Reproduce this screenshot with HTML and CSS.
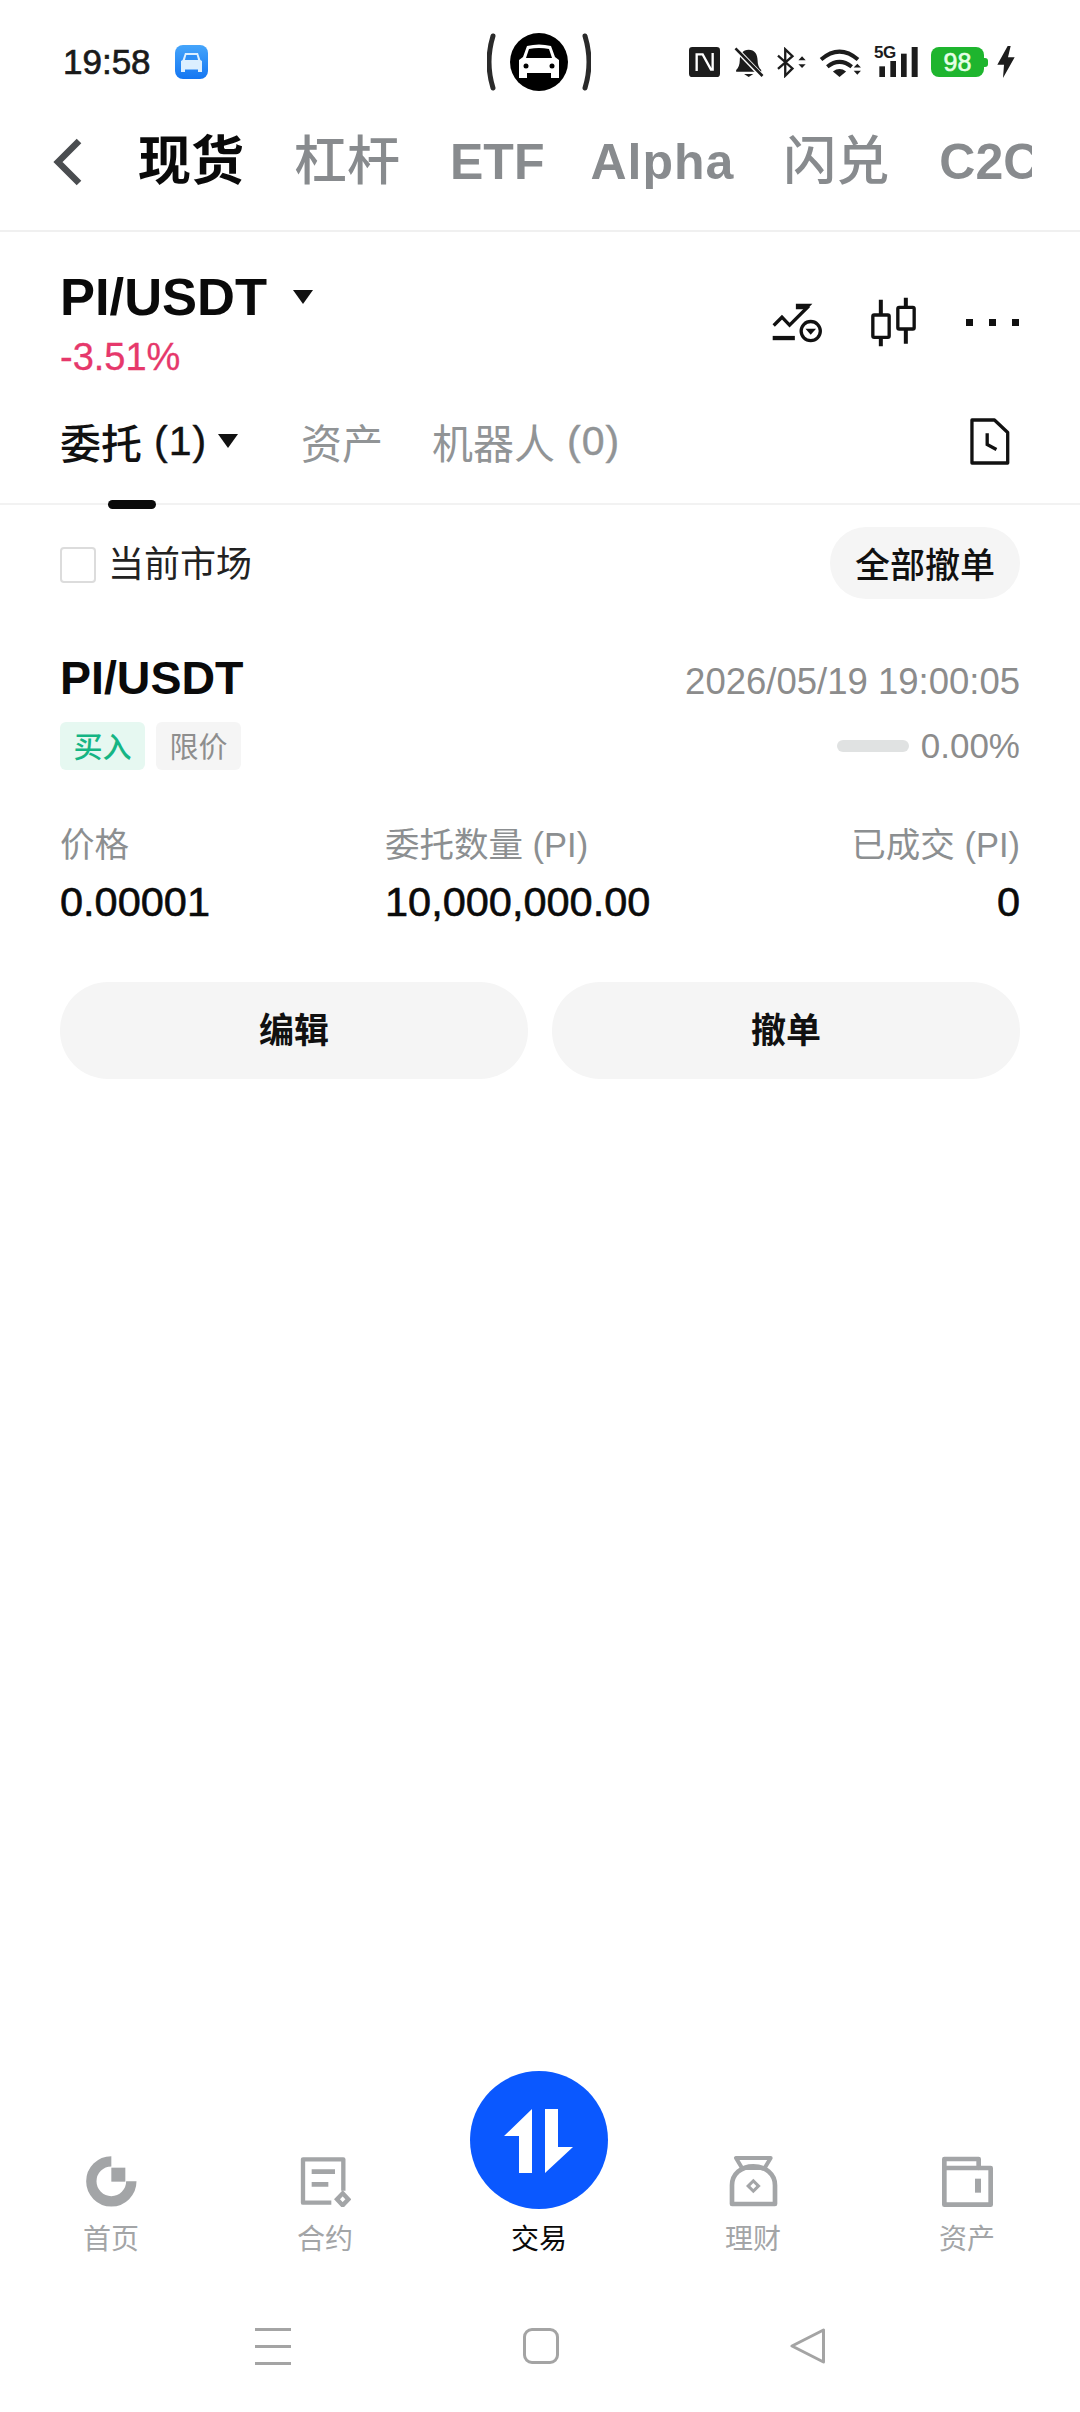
FILE: index.html
```html
<!DOCTYPE html>
<html lang="zh-CN">
<head>
    <meta charset="UTF-8">
    <meta name="viewport" content="width=device-width, initial-scale=1.0">
    <title>PI/USDT 现货委托</title>
    <link rel="stylesheet" href="styles.css">
</head>
<body>
<div class="page">

    <div class="status">
        <div class="status-left">
            <span class="clock">19:58</span>
            <svg class="app-icon" viewBox="0 0 33 34">
                <defs><linearGradient id="appbg" x1="0" y1="0" x2="0" y2="1"><stop offset="0" stop-color="#45a5fb"/><stop offset="1" stop-color="#1476f2"/></linearGradient></defs>
                <rect width="33" height="34" rx="8" fill="url(#appbg)"/>
                <path d="M10 8h13l2.400 7 1.600 1v11h-4v-2.500H10V27H6V16l1.600-1z" fill="#dcefff"/>
                <path d="M11.300 10h10.400l1.400 5H9.900z" fill="#2d8ef5"/>
            </svg>
        </div>
        <svg class="car-badge" viewBox="0 0 104 62">
            <path d="M6 5Q-2 31 6 57M98 5Q106 31 98 57" fill="none" stroke="#2a2a2a" stroke-width="5" stroke-linecap="round"/>
            <circle cx="52" cy="31" r="29" fill="#000"/>
            <path d="M40 15q12-3 24 0l4 11 4 3v18h-8v-5H40v5h-8V29l4-3z" fill="#fff"/>
            <path d="M42 18q10-2 20 0l3 9H39z" fill="#000"/>
            <circle cx="39" cy="35" r="2.500" fill="#000"/>
            <circle cx="65" cy="35" r="2.500" fill="#000"/>
        </svg>
        <div class="status-right">
            <svg class="ic-nfc" viewBox="85 50 93 90">
                <rect x="85" y="50" width="93" height="90" rx="10" fill="#1c1c1c"/>
                <path d="M108 122V72h18l25 46h5V68" fill="none" stroke="#fff" stroke-width="7"/>
            </svg>
            <svg class="ic-bell" viewBox="218 48 90 94">
                <path d="M262 56c-18 0-27 14-27 32 0 14-4 22-11 30v5h76v-5c-7-8-11-16-11-30 0-18-9-32-27-32z" fill="#1c1c1c"/>
                <path d="M248 130h28l-14 9z" fill="#1c1c1c"/>
                <path d="M214 44l90 94" stroke="#fff" stroke-width="15"/>
                <path d="M222 52l82 84" stroke="#1c1c1c" stroke-width="8"/>
            </svg>
            <svg class="ic-bt" viewBox="345 48 92 94">
                <path d="M350 74l44 39-22 22V55l22 21-44 38" fill="none" stroke="#1c1c1c" stroke-width="7"/>
                <path d="M412 88l11-12 11 12zM412 100l11 12 11-12z" fill="#1c1c1c"/>
            </svg>
            <svg class="ic-wifi" viewBox="475 50 130 94">
                <path d="M481 88q56-48 112 0M500 110q37-30 74 0" fill="none" stroke="#1c1c1c" stroke-width="12"/>
                <path d="M517 124q20-14 40 0l-20 17z" fill="#1c1c1c"/>
                <path d="M580 112l11-11 11 11zM580 122l11 12 11-12z" fill="#1c1c1c"/>
            </svg>
            <div class="signal">
                <span class="net">5G</span>
                <svg class="ic-bars" viewBox="655 50 115 90">
                    <rect x="655" y="108" width="17" height="32" fill="#1c1c1c"/>
                    <rect x="688" y="92" width="17" height="48" fill="#1c1c1c"/>
                    <rect x="720" y="70" width="17" height="70" fill="#1c1c1c"/>
                    <rect x="752" y="50" width="18" height="90" fill="#1c1c1c"/>
                </svg>
            </div>
            <div class="battery"><span class="battery-level">98</span></div>
            <svg class="ic-bolt" viewBox="1010 50 54 96">
                <path d="M1042 50l-31 56h20l-3 40 35-62h-20l8-34z" fill="#1c1c1c"/>
            </svg>
        </div>
    </div>

    <div class="topnav">
        <svg class="back" viewBox="0 0 30 48"><path d="M26 3L5 24l21 21" fill="none" stroke="#4a4d50" stroke-width="6.500"/></svg>
        <div class="topnav-tabs">
            <span class="topnav-tab active">现货</span>
            <span class="topnav-tab">杠杆</span>
            <span class="topnav-tab latin">ETF</span>
            <span class="topnav-tab latin alpha">Alpha</span>
            <span class="topnav-tab">闪兑</span>
            <span class="topnav-tab latin">C2C</span>
        </div>
    </div>

    <div class="pair">
        <div class="pair-info">
            <div class="pair-name">
                <span>PI/USDT</span>
                <i class="caret caret-lg"></i>
            </div>
            <div class="pair-change">-3.51%</div>
        </div>
        <div class="pair-tools">
            <svg class="tool-trend" viewBox="95 92 160 130">
                <path d="M103 166l25-25 23 24 58-58" fill="none" stroke="#111" stroke-width="10"/>
                <path d="M170 100h50l-16 17h-34z" fill="#111"/>
                <path d="M100 204h67" stroke="#111" stroke-width="13"/>
                <circle cx="215" cy="183" r="29" fill="#fff" stroke="#111" stroke-width="10"/>
                <path d="M199 176h32l-16 18z" fill="#111"/>
            </svg>
            <svg class="tool-candle" viewBox="392 82 140 150">
                <path d="M424 90v140M499 84v138" stroke="#111" stroke-width="12"/>
                <rect x="400" y="136" width="49" height="67" rx="4" fill="#fff" stroke="#111" stroke-width="10"/>
                <rect x="475" y="113" width="49" height="65" rx="4" fill="#fff" stroke="#111" stroke-width="10"/>
            </svg>
            <div class="tool-more"><i></i><i></i><i></i></div>
        </div>
    </div>

    <div class="subtabs">
        <div class="subtab active">
            <span>委托</span>
            <span class="count">(1)</span>
            <i class="caret caret-sm"></i>
            <b class="underline"></b>
        </div>
        <div class="subtab">资产</div>
        <div class="subtab">机器人<span class="count">(0)</span></div>
        <svg class="history" viewBox="688 446 122 142">
            <path d="M696 452h68l40 38v92H696z" fill="none" stroke="#111" stroke-width="10" stroke-linejoin="round"/>
            <path d="M742 492v34l28 15" fill="none" stroke="#111" stroke-width="10"/>
        </svg>
    </div>

    <div class="filter">
        <label class="check"><i class="box"></i>当前市场</label>
        <button class="cancel-all">全部撤单</button>
    </div>

    <div class="order">
        <div class="order-head">
            <div class="order-title">PI/USDT</div>
            <div class="order-time">2026/05/19 19:00:05</div>
        </div>
        <div class="order-meta">
            <div class="tags">
                <span class="tag buy">买入</span>
                <span class="tag">限价</span>
            </div>
            <div class="fill">
                <span class="fill-bar"></span>
                <span>0.00%</span>
            </div>
        </div>
        <div class="order-cols">
            <div class="col">
                <div class="col-label">价格</div>
                <div class="col-value">0.00001</div>
            </div>
            <div class="col">
                <div class="col-label">委托数量 (PI)</div>
                <div class="col-value">10,000,000.00</div>
            </div>
            <div class="col right">
                <div class="col-label">已成交 (PI)</div>
                <div class="col-value">0</div>
            </div>
        </div>
        <div class="order-actions">
            <button>编辑</button>
            <button>撤单</button>
        </div>
    </div>

    <div class="spacer"></div>

    <div class="bottom-tabs">
        <div class="btab">
            <svg class="btab-icon" viewBox="140 320 153 153">
                <path d="M216 336a60 60 0 1 0 60 60" fill="none" stroke="#a3a5a7" stroke-width="31"/>
                <rect x="216" y="355" width="42" height="42" fill="#a3a5a7"/>
            </svg>
            <span>首页</span>
        </div>
        <div class="btab">
            <svg class="btab-icon" viewBox="780 320 153 153">
                <path d="M874 460H789V330H910V424" fill="none" stroke="#a3a5a7" stroke-width="13" stroke-linejoin="round"/>
                <path d="M815 367h70M815 405h50" stroke="#a3a5a7" stroke-width="14"/>
                <path d="M908 432l17 18-17 18-17-18z" fill="none" stroke="#a3a5a7" stroke-width="13"/>
            </svg>
            <span>合约</span>
        </div>
        <div class="btab active">
            <svg class="trade" viewBox="0 0 138 138">
                <circle cx="69" cy="69" r="69" fill="#0a58ff"/>
                <path d="M62 38L34 65H49V102H62zM75 38H88V76H103L75 102z" fill="#fff"/>
            </svg>
            <span>交易</span>
        </div>
        <div class="btab">
            <svg class="btab-icon" viewBox="0 0 153 153">
                <path d="M12 144V88c0-34 28-57 64-57s65 23 65 57v56z" fill="none" stroke="#a3a5a7" stroke-width="14" stroke-linejoin="round"/>
                <path d="M24 6h104L110 36H42z" fill="none" stroke="#a3a5a7" stroke-width="12" stroke-linejoin="round"/>
                <path d="M76 68l22 22-22 22-22-22z" fill="#a3a5a7"/>
                <path d="M76 81l9 9-9 9-9-9z" fill="#fff"/>
            </svg>
            <span>理财</span>
        </div>
        <div class="btab">
            <svg class="btab-icon" viewBox="0 0 153 153">
                <path d="M7 146V9H110V36H146V146z" fill="none" stroke="#a3a5a7" stroke-width="14" stroke-linejoin="round"/>
                <path d="M7 36H110" stroke="#a3a5a7" stroke-width="13"/>
                <rect x="99" y="68" width="18" height="42" fill="#a3a5a7"/>
            </svg>
            <span>资产</span>
        </div>
    </div>

    <div class="sysnav">
        <div class="sys-menu"><i></i><i></i><i></i></div>
        <div class="sys-home"></div>
        <svg class="sys-back" viewBox="0 0 36 36"><path d="M33.500 2v32L2 18z" fill="none" stroke="#a4a4a4" stroke-width="3" stroke-linejoin="round"/></svg>
    </div>

</div>
</body>
</html>
```

FILE: styles.css
```css
* { box-sizing: border-box; }
body { margin: 0; background: #fff; font-family: "Liberation Sans", "Noto Sans CJK SC", sans-serif; color: #111; }
i { display: block; font-style: normal; }
svg { display: block; flex: none; }
button { font-family: inherit; border: none; background: #f5f5f5; color: #111; padding: 0; }

.page { width: 1080px; height: 2412px; display: flex; flex-direction: column; overflow: hidden; }

/* status bar */
.status { height: 124px; display: grid; grid-template-columns: 1fr 104px 1fr; align-items: center; padding: 0 65px 0 63px; }
.status-left { display: flex; align-items: center; gap: 24px; }
.clock { font-size: 35px; color: #1a1a1a; -webkit-text-stroke: 0.7px #1a1a1a; }
.app-icon { width: 33px; height: 34px; }
.car-badge { width: 104px; height: 62px; }
.status-right { display: flex; align-items: center; justify-content: flex-end; }
.ic-nfc { width: 31px; height: 30px; margin-right: 14px; }
.ic-bell { width: 30px; height: 31px; margin-right: 12px; }
.ic-bt { width: 31px; height: 31px; margin-right: 12px; }
.ic-wifi { width: 43px; height: 31px; margin-right: 12px; }
.signal { position: relative; width: 44px; height: 30px; margin-right: 13px; }
.net { position: absolute; left: 0; top: -2px; font-size: 17px; font-weight: 700; line-height: 16px; color: #1c1c1c; letter-spacing: -0.5px; }
.ic-bars { position: absolute; right: 0; top: 0; width: 39px; height: 30px; }
.battery { position: relative; width: 53px; height: 30px; background: #1eb52e; border-radius: 8px; display: flex; align-items: center; justify-content: center; margin-right: 13px; }
.battery::after { content: ""; position: absolute; right: -4px; top: 11px; width: 4px; height: 9px; background: #1eb52e; border-radius: 0 3px 3px 0; }
.battery-level { font-size: 25px; color: #e6ffe6; -webkit-text-stroke: 0.6px #e6ffe6; }
.ic-bolt { width: 18px; height: 32px; }

/* top tabs */
.topnav { height: 108px; padding: 0 48px 30px 53px; display: flex; align-items: center; border-bottom: 2px solid #f0f0f0; }
.back { width: 30px; height: 48px; margin-right: 55px; }
.topnav-tabs { flex: 1; display: flex; gap: 50px; overflow: hidden; }
.topnav-tab { font-size: 53px; font-weight: 500; line-height: 76px; color: #888b8e; white-space: nowrap; flex: none; }
.topnav-tab.latin { font-size: 50px; font-weight: 700; }
.topnav-tab.alpha { letter-spacing: 1px; margin: 0 -1px 0 -4px; }
.topnav-tab.active { color: #0a0a0a; font-weight: 700; }

/* pair header */
.pair { display: flex; justify-content: space-between; padding: 33px 60px 0; }
.pair-name { display: flex; align-items: center; gap: 26px; font-size: 52.500px; font-weight: 700; line-height: 64px; color: #0a0a0a; }
.pair-change { font-size: 38px; line-height: 44px; margin-top: 6px; color: #e6386b; -webkit-text-stroke: 0.3px #e6386b; }
.caret { width: 0; height: 0; border-style: solid; border-color: #111 transparent transparent; }
.caret-lg { border-width: 14px 10px 0; }
.caret-sm { border-width: 14px 10px 0; margin-left: 11px; }
.pair-tools { display: flex; align-items: center; }
.tool-trend { width: 53px; height: 43px; margin-right: 46px; }
.tool-candle { width: 47px; height: 50px; margin-right: 49px; }
.tool-more { display: flex; gap: 16px; width: 54px; }
.tool-more i { width: 7px; height: 7px; background: #111; }

/* sub tabs */
.subtabs { height: 126px; padding: 0 60px; display: flex; align-items: center; gap: 49px; border-bottom: 2px solid #f2f2f2; }
.subtab { position: relative; display: flex; align-items: center; font-size: 41px; color: #919496; }
.subtab.active { color: #111; font-weight: 500; margin-right: 14px; }
.subtab .count { margin-left: 12px; letter-spacing: 1px; -webkit-text-stroke: 0.4px currentColor; }
.underline { position: absolute; left: 48px; bottom: -38px; width: 48px; height: 9px; border-radius: 5px; background: #0a0a0a; }
.history { width: 41px; height: 47px; margin-left: auto; margin-right: 10px; }

/* filter */
.filter { display: flex; justify-content: space-between; align-items: center; padding: 22px 60px 0; }
.check { display: flex; align-items: center; gap: 12px; padding-top: 4px; font-size: 36px; line-height: 44px; color: #222; }
.box { width: 36px; height: 36px; margin-top: -1px; border: 2px solid #dcdcdc; border-radius: 4px; }
.cancel-all { width: 190px; height: 72px; padding-bottom: 2px; border-radius: 36px; font-size: 35px; font-weight: 500; }

/* order card */
.order { padding: 52px 60px 0; }
.order-head { display: flex; justify-content: space-between; align-items: baseline; height: 54px; }
.order-title { font-size: 46.500px; font-weight: 700; color: #0a0a0a; }
.order-time { font-size: 36.500px; color: #8c8c8c; }
.order-meta { display: flex; justify-content: space-between; align-items: center; margin-top: 17px; }
.tags { display: flex; gap: 11px; }
.tag { width: 85px; height: 48px; padding-bottom: 3px; border-radius: 6px; background: #f5f5f5; color: #8e8e8e; font-size: 29px; display: flex; align-items: center; justify-content: center; }
.tag.buy { background: #e6f8f1; color: #15b584; font-weight: 500; }
.fill { display: flex; align-items: center; gap: 12px; font-size: 35px; color: #8c8c8c; }
.fill-bar { width: 72px; height: 12px; border-radius: 6px; background: #e0e2e2; }
.order-cols { display: grid; grid-template-columns: 325px 1fr auto; margin-top: 53px; }
.col.right { text-align: right; }
.col-label { font-size: 34.500px; line-height: 44px; color: #8c8f91; }
.col-value { font-size: 41.500px; line-height: 52px; margin-top: 9px; color: #0a0a0a; -webkit-text-stroke: 0.6px #0a0a0a; }
.order-actions { display: flex; gap: 24px; margin-top: 54px; }
.order-actions button { flex: 1; height: 97px; padding-bottom: 6px; border-radius: 48px; font-size: 35px; font-weight: 700; }

.spacer { flex: 1; }

/* bottom tabs */
.bottom-tabs { display: grid; grid-template-columns: repeat(5, 214px); padding: 0 4px; align-items: end; }
.btab { display: flex; flex-direction: column; align-items: center; font-size: 28px; line-height: 36px; color: #a3a5a7; }
.btab.active { color: #0a0a0a; }
.btab-icon { width: 51px; height: 51px; margin-bottom: 15px; }
.trade { width: 138px; height: 138px; margin-bottom: 13px; }

/* system nav */
.sysnav { height: 154px; display: flex; align-items: center; padding-top: 22px; }
.sys-menu { display: flex; flex-direction: column; gap: 14px; width: 36px; margin-left: 255px; }
.sys-menu i { height: 3px; background: #a4a4a4; }
.sys-home { width: 36px; height: 36px; border: 3px solid #a4a4a4; border-radius: 9px; margin-left: 232px; }
.sys-back { width: 36px; height: 36px; margin-left: 231px; }
```
